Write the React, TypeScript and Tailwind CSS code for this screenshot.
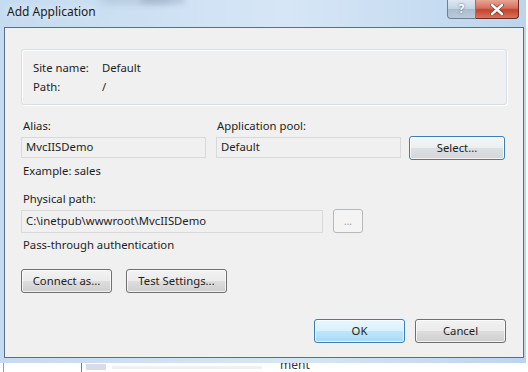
import React from 'react';

const FONT = { fontFamily: '"Segoe UI", "Noto Sans", "Liberation Sans", sans-serif' };

type Variant = 'normal' | 'default' | 'focus' | 'disabled';

function Button({ label, width, variant = 'normal' }: { label: string; width: string; variant?: Variant }) {
  if (variant === 'disabled') {
    return (
      <div className={`${width} h-[24px] flex items-center justify-center rounded-[3px] border border-[#b5b9bc] bg-[#f4f4f4] text-[#9a9a9a] text-[10px]`}>
        {label}
      </div>
    );
  }
  const skin =
    variant === 'default'
      ? 'border-[#3c7fb1] bg-[linear-gradient(#eaf6fd_0%,#d9f0fc_50%,#bee6fd_51%,#a7d9f5_100%)]'
      : variant === 'focus'
        ? 'border-[#3c7fb1] bg-[linear-gradient(#f3f5f7_0%,#eceef0_50%,#dde0e3_51%,#d2d6da_100%)]'
        : 'border-[#707070] bg-[linear-gradient(#f2f2f2_0%,#ebebeb_50%,#dddddd_51%,#cfcfcf_100%)]';
  return (
    <div
      className={`${width} h-[24px] flex items-center justify-center rounded-[3px] border ${skin} shadow-[inset_0_0_0_1px_rgba(255,255,255,0.7)] text-[11.3px] text-[#1e1e1e]`}
    >
      {label}
    </div>
  );
}

function TextBox({ value, width, height }: { value: string; width: string; height: string }) {
  return (
    <div className={`${width} ${height} flex items-center px-[4px] border border-[#d9d9d9] bg-[#f0f0f0] text-[11.3px] text-[#1e1e1e]`}>
      {value}
    </div>
  );
}

export default function App() {
  return (
    <div className="w-[528px] h-[372px] bg-white overflow-hidden" style={FONT}>
      {/* window frame */}
      <div className="w-[526px] h-[363px] flex flex-col bg-[linear-gradient(90deg,#c5dbf1,#d6e6f6_55%,#bcd5ee)] relative">
        <div className="absolute left-[100px] top-[-5px] w-[70px] h-[8px] rounded-full bg-[#8a9db2] opacity-40 blur-[4px]" />
        <div className="absolute left-[140px] top-[-3px] w-[45px] h-[6px] rounded-full bg-[#6d8096] opacity-35 blur-[3px]" />

        {/* title bar */}
        <div className="h-[27px] flex items-start shrink-0 relative">
          <div className="pl-[7px] pt-[3px] text-[12px] text-[#1a1a1a] [text-shadow:0_0_8px_#ffffff]">Add Application</div>
          <div className="ml-auto mr-[7px] flex">
            <div className="w-[29px] h-[19px] flex items-center justify-center rounded-bl-[4px] border border-t-0 border-[#6e7f93] bg-[linear-gradient(#dfe8f1,#c3d2e2_50%,#a9bbcf_51%,#bccadb)] text-[12px] font-bold text-white [text-shadow:0_0_2px_#40546a]">
              ?
            </div>
            <div className="w-[43px] h-[19px] flex items-center justify-center rounded-br-[4px] border border-t-0 border-l-0 border-[#6b2b22] bg-[linear-gradient(#e8a595,#d6705c_45%,#c2432c_55%,#d9745c)]">
              <svg width="14" height="11" viewBox="0 0 14 11">
                <path d="M2 1 L12 10 M12 1 L2 10" stroke="#3a1a16" strokeWidth="4" strokeLinecap="round" opacity="0.55" />
                <path d="M2 1 L12 10 M12 1 L2 10" stroke="#ffffff" strokeWidth="2.4" strokeLinecap="round" />
              </svg>
            </div>
          </div>
        </div>

        {/* client area */}
        <div className="ml-[4px] mr-[2px] h-[331px] border border-[#5a6e86] bg-[#f0f0f0] px-[16px] pt-[21px] flex flex-col text-[11.3px] text-[#1e1e1e]">
          <div className="w-[486px] h-[56px] rounded-[3px] border border-[#d5dfe5] shadow-[inset_1px_1px_0_#ffffff,1px_1px_0_#ffffff] pl-[11px] pt-[9px]">
            <div className="flex h-[19px] items-center">
              <span className="w-[69px]">Site name:</span>
              <span>Default</span>
            </div>
            <div className="flex h-[19px] items-center">
              <span className="w-[69px]">Path:</span>
              <span>/</span>
            </div>
          </div>

          <div className="mt-[13px] flex items-end">
            <div className="flex flex-col">
              <div className="h-[16px] leading-[16px] pl-[2px]">Alias:</div>
              <div className="mt-[3px]">
                <TextBox value="MvcIISDemo" width="w-[185px]" height="h-[21px]" />
              </div>
            </div>
            <div className="ml-[10px] flex flex-col">
              <div className="h-[16px] leading-[16px] pl-[1px]">Application pool:</div>
              <div className="mt-[3px]">
                <TextBox value="Default" width="w-[185px]" height="h-[21px]" />
              </div>
            </div>
            <div className="ml-[8px] mb-[-2px]">
              <Button label="Select..." width="w-[96px]" variant="focus" />
            </div>
          </div>

          <div className="mt-[5px] h-[16px] leading-[16px] pl-[2px]">Example: sales</div>

          <div className="mt-[12px] h-[16px] leading-[16px] pl-[2px]">Physical path:</div>
          <div className="mt-[2px] flex items-center">
            <TextBox value="C:\inetpub\wwwroot\MvcIISDemo" width="w-[302px]" height="h-[23px]" />
            <div className="ml-[10px]">
              <Button label="..." width="w-[30px]" variant="disabled" />
            </div>
          </div>

          <div className="mt-[4px] h-[16px] leading-[16px] pl-[2px]">Pass-through authentication</div>

          <div className="mt-[16px] flex gap-[14px]">
            <Button label="Connect as..." width="w-[91px]" />
            <Button label="Test Settings..." width="w-[101px]" />
          </div>

          <div className="mt-[26px] flex justify-end gap-[10px] pr-[1px]">
            <Button label="OK" width="w-[91px]" variant="default" />
            <Button label="Cancel" width="w-[91px]" />
          </div>
        </div>
      </div>

      {/* underlying content peeking below */}
      <div className="h-[9px] flex items-start">
        <div className="ml-[3px] w-[1px] h-[9px] bg-[#9a9a9a]" />
        <div className="ml-[77px] w-[1px] h-[9px] bg-[#7a7a7a]" />
        <div className="ml-[4px] mt-[1px] w-[20px] h-[6px] bg-[#d8dde4]" />
        <div className="ml-[6px] mt-[3px] w-[150px] h-[3px] bg-[#f0f0f0]" />
        <div className="ml-[18px] mt-[-4px] text-[12px] text-[#333] leading-[12px]">ment</div>
      </div>
    </div>
  );
}
